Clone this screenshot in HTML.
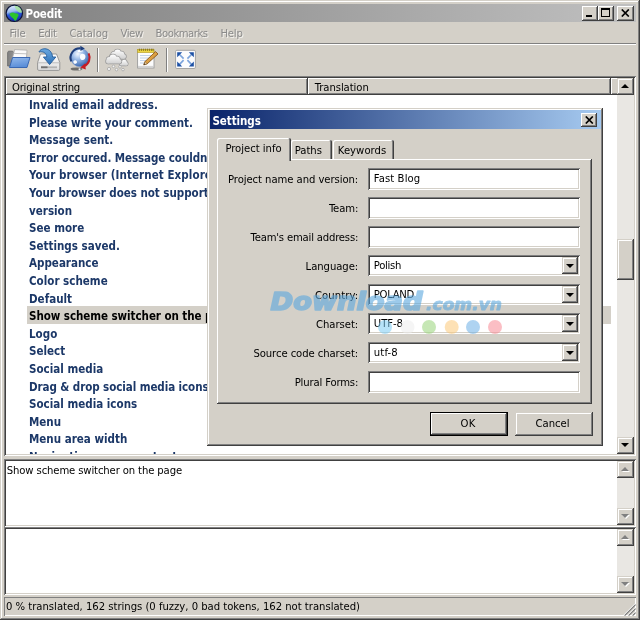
<!DOCTYPE html>
<html><head><meta charset="utf-8"><title>Poedit</title>
<style>
*{box-sizing:border-box;margin:0;padding:0}
html,body{width:640px;height:620px;overflow:hidden;background:#d4d0c8}
body{font-family:"DejaVu Sans Condensed","Liberation Sans",sans-serif;font-size:11.2px;color:#000;position:relative}
.abs{position:absolute}
.tx{position:absolute;white-space:nowrap;line-height:14px}
.b{font-weight:bold;font-size:11.5px}
#win{position:absolute;left:0;top:0;width:640px;height:620px;background:#d4d0c8;filter:blur(0.4px);
 box-shadow:inset -1px -1px #404040, inset 1px 1px #d4d0c8, inset -2px -2px #808080, inset 2px 2px #fff}
#title{position:absolute;left:4px;top:4px;width:632px;height:18px;background:linear-gradient(to right,#808080,#c0c0c0)}
.cbtn{position:absolute;width:16px;height:15px;background:#d4d0c8;box-shadow:inset -1px -1px #404040, inset 1px 1px #fff, inset -2px -2px #808080}
.mi{color:#8a8a8a;text-shadow:1px 1px 0 #f4f2ee}
.hsep{position:absolute;left:4px;width:632px;height:2px;border-top:1px solid #808080;border-bottom:1px solid #fff}
.vsep{position:absolute;width:2px;border-left:1px solid #808080;border-right:1px solid #fff}
.sunken{box-shadow:inset 1px 1px #808080, inset -1px -1px #fff, inset 2px 2px #404040, inset -2px -2px #d4d0c8}
.raised2{background:#d4d0c8;box-shadow:inset -1px -1px #404040, inset 1px 1px #d4d0c8, inset -2px -2px #808080, inset 2px 2px #fff}
.raised{background:#d4d0c8;box-shadow:inset -1px -1px #404040, inset 1px 1px #fff, inset -2px -2px #808080}
#list{position:absolute;left:4px;top:76px;width:632px;height:380px;background:#fff}
#listc{position:absolute;left:6px;top:77px;width:628px;height:377px;overflow:hidden}
.hdr{position:absolute;top:78px;height:17px}
.row{position:absolute;left:27px;width:584px;height:18px;font-weight:bold;font-size:11.5px;line-height:17px;color:#1c3868;white-space:nowrap;overflow:hidden;padding-left:2px;letter-spacing:0.01px}
.row.sel{color:#000}
.track{background-color:#e9e7e3}
.sbtn{position:absolute;left:0;width:17px;height:17px}
.arr{position:absolute;width:0;height:0;border-left:4px solid transparent;border-right:4px solid transparent}
.arr.up{border-bottom:4px solid #000}
.arr.dn{border-top:4px solid #000}
.arr.up.dis{border-bottom-color:#808080;filter:drop-shadow(1px 1px 0 #fff)}
.arr.dn.dis{border-top-color:#808080;filter:drop-shadow(1px 1px 0 #fff)}
.tbox{position:absolute;left:4px;width:632px;height:68px;background:#fff}
#status{position:absolute;left:4px;top:597px;width:632px;height:19px;box-shadow:inset 1px 1px #808080, inset -1px -1px #fff}
#dlg{position:absolute;left:207px;top:108px;width:396px;height:338px;background:#d4d0c8;
 box-shadow:inset -1px -1px #404040, inset 1px 1px #d4d0c8, inset -2px -2px #808080, inset 2px 2px #fff}
#dtitle{position:absolute;left:210px;top:110px;width:391px;height:19px;background:linear-gradient(to right,#0a246a,#a6caf0)}
.tab{position:absolute;background:#d4d0c8;border-radius:2px 2px 0 0;box-shadow:inset -1px 0 #404040, inset 1px 1px #fff, inset -2px 0 #808080}
#panel{position:absolute;left:217px;top:159px;width:375px;height:245px;background:#d4d0c8;box-shadow:inset -1px -1px #404040, inset 1px 1px #fff, inset -2px -2px #808080}
.inp{position:absolute;left:368px;width:212px;height:21px;background:#fff}
.dd{position:absolute;width:16px;height:17px}
.btn{position:absolute;width:78px;height:24px}
</style></head><body>
<div id="win">
 <div id="title"></div>
 <svg class="abs" style="left:5px;top:4px" width="19" height="19" viewBox="0 0 19 19">
   <defs><linearGradient id="gl" x1="0.3" y1="0" x2="0.5" y2="1"><stop offset="0" stop-color="#e4eefc"/><stop offset="0.38" stop-color="#9cbcf0"/><stop offset="0.55" stop-color="#2c58dc"/><stop offset="1" stop-color="#1428a8"/></linearGradient></defs>
   <circle cx="9.3" cy="9.3" r="8.2" fill="url(#gl)" stroke="#0c1438" stroke-width="1.2"/>
   <path d="M9.5 1.8 C13.5 1.6 16.8 4.5 17 8.6 C14.5 9.6 11 7.5 9.5 1.8Z" fill="#a4e49c" opacity="0.85"/>
   <path d="M4.6 9.8 C6.2 8.3 8.8 8.2 10.3 9.4 C11.8 8.9 13.4 9.8 13.7 11.2 C12.9 12.6 12.1 14 11.4 16 C10.7 17.2 9.5 17 9 15.6 C8.5 14.2 7 13.6 5.7 12.2 C4.9 11.2 4.4 10.4 4.6 9.8Z" fill="#2cc42c"/>
 </svg>
 <span id="f13" class="tx fit b" style="left:25.5px;top:7px;letter-spacing:-0.185px;color:#fff">Poedit</span>
 <div class="cbtn" style="left:582px;top:6px"><div class="abs" style="left:4px;top:9px;width:6px;height:2px;background:#000"></div></div>
 <div class="cbtn" style="left:598px;top:6px"><div class="abs" style="left:3px;top:2px;width:9px;height:9px;border:1px solid #000;border-top-width:2px"></div></div>
 <div class="cbtn" style="left:617px;top:6px;width:17px"><svg class="abs" style="left:4px;top:3px" width="9" height="8" viewBox="0 0 9 8"><path d="M0.8 0.5L7.8 7.5M7.8 0.5L0.8 7.5" stroke="#000" stroke-width="1.7"/></svg></div>
 <span id="f14" class="tx fit mi" style="left:9.5px;top:27px;letter-spacing:-0.216px;">File</span><span id="f15" class="tx fit mi" style="left:38.3px;top:27px;letter-spacing:-0.250px;">Edit</span><span id="f16" class="tx fit mi" style="left:69.6px;top:27px;letter-spacing:-0.008px;">Catalog</span><span id="f17" class="tx fit mi" style="left:120.4px;top:27px;letter-spacing:-0.369px;">View</span><span id="f18" class="tx fit mi" style="left:155.6px;top:27px;letter-spacing:-0.470px;">Bookmarks</span><span id="f19" class="tx fit mi" style="left:220.4px;top:27px;letter-spacing:-0.142px;">Help</span>
 <div class="hsep" style="top:43px"></div>
 <div id="toolbar">
<svg class="abs" style="left:0;top:44px" width="210" height="32" viewBox="0 44 210 32">
 <defs>
  <linearGradient id="fb" x1="0" y1="0" x2="0.3" y2="1"><stop offset="0" stop-color="#94baec"/><stop offset="1" stop-color="#5a8ed8"/></linearGradient>
  <linearGradient id="fg" x1="0" y1="0" x2="1" y2="0"><stop offset="0" stop-color="#808080"/><stop offset="1" stop-color="#b4b4b4"/></linearGradient>
  <linearGradient id="dv" x1="0" y1="0" x2="0" y2="1"><stop offset="0" stop-color="#ffffff"/><stop offset="1" stop-color="#dcdcdc"/></linearGradient>
  <linearGradient id="ar" x1="0" y1="0" x2="0" y2="1"><stop offset="0" stop-color="#6aa8e0"/><stop offset="1" stop-color="#2c70b8"/></linearGradient>
  <radialGradient id="gb" cx="0.38" cy="0.3" r="0.75"><stop offset="0" stop-color="#f4f8ff"/><stop offset="0.4" stop-color="#9cbce8"/><stop offset="1" stop-color="#2c5ca8"/></radialGradient>
  <linearGradient id="cl" x1="0" y1="0" x2="0" y2="1"><stop offset="0" stop-color="#fafafa"/><stop offset="1" stop-color="#d0d0d0"/></linearGradient>
  <linearGradient id="pc" x1="0" y1="0" x2="1" y2="1"><stop offset="0" stop-color="#f0b860"/><stop offset="1" stop-color="#c88828"/></linearGradient>
 </defs>
 <!-- open folder -->
 <path d="M7.6 52.6 L8.4 51.2 L12.6 51.2 L13.4 52.4 L26 52.4 L26 66 L7.6 66Z" fill="url(#fg)" stroke="#686868" stroke-width="0.8"/>
 <path d="M14.6 49.6 L27 50.2 L26.4 60 L12 60Z" fill="#fafafa" stroke="#a4a4a4" stroke-width="0.7"/>
 <path d="M13.6 53.4 L26.6 53.8" stroke="#b4b4b4" stroke-width="0.8"/>
 <path d="M12.6 57.5 L30 57.5 L27 67.5 L9.5 67.5Z" fill="url(#fb)" stroke="#2f5fae" stroke-width="0.9" stroke-linejoin="round"/>
 <!-- drive with arrow -->
 <path d="M40.5 54 L56.5 54 L59.8 62.5 L59.8 69 Q59.8 70.4 58.6 70.4 L38.8 70.4 Q37.6 70.4 37.6 69 L37.6 62.5Z" fill="url(#dv)" stroke="#909090" stroke-width="0.9" stroke-linejoin="round"/>
 <path d="M38 62.8 H59.4" stroke="#b0b0b0" stroke-width="0.8"/>
 <rect x="41" y="66.4" width="16" height="1.8" fill="#b4b4b4"/>
 <rect x="41" y="66.4" width="6.5" height="1.8" fill="#707070"/>
 <path d="M39 52 C40.5 47.5 51.5 46.5 52.6 57 L55.8 57 L49.6 64.6 L43.4 57 L46.8 57 C46.6 53 43 51 39 52Z" fill="url(#ar)" stroke="#245c9c" stroke-width="0.9" stroke-linejoin="round"/>
 <!-- globe with arrows -->
 <ellipse cx="76.5" cy="69" rx="6" ry="1.6" fill="#4c4c4c" opacity="0.75"/>
 <circle cx="79.5" cy="69.3" r="1" fill="#f0f0f0"/>
 <circle cx="80" cy="57.6" r="9.2" fill="url(#gb)" stroke="#7c98c8" stroke-width="0.7"/>
 <path d="M80.4 54.5 C81.9 53 84.9 53.6 85.4 56 C85.8 58.5 83.9 60.5 81.9 60 C79.9 59.4 79.4 56 80.4 54.5Z M73.6 61 C74.6 59.8 76.8 60.4 77 62 C77.1 63.6 75.1 64.4 74 63.4 C73.2 62.6 73.1 61.6 73.6 61Z M77.4 50.5 C79.4 49.6 82.4 50 83.4 51.2 C81.4 51.6 79.4 52.4 78 52 Z" fill="#fbfdff"/>
 <path d="M71.3 61.4 A9.4 9.4 0 0 1 80.6 48.3" fill="none" stroke="#1f3f7c" stroke-width="2.1"/>
 <path d="M80.3 45.8 L84.8 48.5 L80.5 51Z" fill="#1f3f7c"/>
 <path d="M88.6 53.4 A9.4 9.4 0 0 1 84 66.2" fill="none" stroke="#c41c24" stroke-width="2.1"/>
 <path d="M85 63.6 L80.2 67.4 L85.8 69.4Z" fill="#c41c24"/>
 <!-- cloud (disabled) -->
 <linearGradient id="cA" gradientUnits="userSpaceOnUse" x1="0" y1="49.5" x2="0" y2="59"><stop offset="0" stop-color="#ffffff"/><stop offset="1" stop-color="#cfcfcf"/></linearGradient><g fill="#9c9c9c" stroke="#9c9c9c" stroke-width="1.5"><circle cx="114" cy="54.6" r="2.8"/><circle cx="117.6" cy="52.8" r="3.2"/><circle cx="121.4" cy="54.2" r="2.8"/><circle cx="123.8" cy="56.4" r="2.2"/><circle cx="111.8" cy="56.6" r="2.0"/><rect x="111.5" y="55" width="13.5" height="3.8" rx="1.5"/></g><g fill="url(#cA)"><circle cx="114" cy="54.6" r="2.8"/><circle cx="117.6" cy="52.8" r="3.2"/><circle cx="121.4" cy="54.2" r="2.8"/><circle cx="123.8" cy="56.4" r="2.2"/><circle cx="111.8" cy="56.6" r="2.0"/><rect x="111.5" y="55" width="13.5" height="3.8" rx="1.5"/></g>
 <linearGradient id="cC" gradientUnits="userSpaceOnUse" x1="0" y1="59.5" x2="0" y2="66"><stop offset="0" stop-color="#ffffff"/><stop offset="1" stop-color="#cfcfcf"/></linearGradient><g fill="#9c9c9c" stroke="#9c9c9c" stroke-width="1.5"><circle cx="121.6" cy="63.2" r="2.1"/><circle cx="124.2" cy="62.2" r="2.5"/><circle cx="126.2" cy="63.8" r="1.7"/><rect x="120.5" y="62.8" width="6.8" height="2.7" rx="1.5"/></g><g fill="url(#cC)"><circle cx="121.6" cy="63.2" r="2.1"/><circle cx="124.2" cy="62.2" r="2.5"/><circle cx="126.2" cy="63.8" r="1.7"/><rect x="120.5" y="62.8" width="6.8" height="2.7" rx="1.5"/></g>
 <linearGradient id="cB" gradientUnits="userSpaceOnUse" x1="0" y1="54.5" x2="0" y2="64"><stop offset="0" stop-color="#ffffff"/><stop offset="1" stop-color="#cfcfcf"/></linearGradient><g fill="#9c9c9c" stroke="#9c9c9c" stroke-width="1.5"><circle cx="109.2" cy="59.8" r="2.7"/><circle cx="113" cy="57.8" r="3.3"/><circle cx="117" cy="59.5" r="2.9"/><circle cx="119.4" cy="61.2" r="2.0"/><circle cx="108" cy="61.4" r="2.0"/><rect x="107" y="60" width="14" height="3.4" rx="1.5"/></g><g fill="url(#cB)"><circle cx="109.2" cy="59.8" r="2.7"/><circle cx="113" cy="57.8" r="3.3"/><circle cx="117" cy="59.5" r="2.9"/><circle cx="119.4" cy="61.2" r="2.0"/><circle cx="108" cy="61.4" r="2.0"/><rect x="107" y="60" width="14" height="3.4" rx="1.5"/></g>
 <g fill="#f4f4f4" stroke="#a4a4a4" stroke-width="0.8"><circle cx="109" cy="69" r="1.6"/><circle cx="113.5" cy="66.4" r="1.3"/><circle cx="116.5" cy="69.6" r="1.3"/><circle cx="120" cy="66.8" r="1.3"/><circle cx="123" cy="69.6" r="1.3"/></g>
 <!-- notepad -->
 <rect x="137.6" y="51" width="16.4" height="17" fill="#fcfcfc" stroke="#9c9c9c" stroke-width="0.9"/>
 <path d="M138 66.4 H153.6" stroke="#c4c4c4" stroke-width="0.8"/>
 <rect x="137.6" y="49.4" width="16.4" height="3.2" fill="#ecd444" stroke="#b49c24" stroke-width="0.6"/>
 <path d="M139.4 48.6 V51 M141.4 48.6 V51 M143.4 48.6 V51 M145.4 48.6 V51 M147.4 48.6 V51 M149.4 48.6 V51 M151.4 48.6 V51 M153 48.6 V51" stroke="#6c5c10" stroke-width="0.7"/>
 <path d="M140 55.5 H151 M140 58 H151 M140 60.5 H151 M140 63 H148" stroke="#b4c8e4" stroke-width="0.8"/>
 <path d="M155.6 51.6 L158 54 L147.2 63.8 L143.8 64.8 L145 61.6Z" fill="url(#pc)" stroke="#7c4c14" stroke-width="0.8" stroke-linejoin="round"/>
 <path d="M143.8 64.8 L145 61.6 L147.2 63.8Z" fill="#f0dcb4" stroke="#7c4c14" stroke-width="0.5"/>
 <path d="M143.8 64.8 L144.4 63.3 L145.4 64.3Z" fill="#202020"/>
 <!-- fullscreen -->
 <rect x="175.6" y="50.3" width="19.8" height="18.2" rx="1.2" fill="#fcfcfd" stroke="#9c9c9c" stroke-width="0.9"/>
 <g stroke="#7ca4dc" stroke-width="1.7">
  <path d="M179.5 54.5 L183.6 58.6 M191.5 54.5 L187.4 58.6 M179.5 64.3 L183.6 60.2 M191.5 64.3 L187.4 60.2"/>
 </g>
 <g fill="#1d50a4">
  <path d="M177.2 52.2 L182.2 52.2 L177.2 57.2Z"/>
  <path d="M193.8 52.2 L188.8 52.2 L193.8 57.2Z"/>
  <path d="M177.2 66.6 L182.2 66.6 L177.2 61.6Z"/>
  <path d="M193.8 66.6 L188.8 66.6 L193.8 61.6Z"/>
 </g>
</svg>
<div class="vsep" style="left:97px;top:48px;height:24px"></div>
<div class="vsep" style="left:166px;top:48px;height:24px"></div>
</div>
 <div id="list" class="sunken"></div>
 <div id="listc" style="position:absolute;left:0;top:0;width:634px;height:454px;clip-path:inset(78px 0 0 6px)">
   <div class="row" style="top:97.0px"><span>Invalid email address.</span></div>
<div class="row" style="top:114.6px"><span>Please write your comment.</span></div>
<div class="row" style="top:132.2px"><span>Message sent.</span></div>
<div class="row" style="top:149.8px;letter-spacing:-0.075px"><span>Error occured. Message couldn't</span></div>
<div class="row" style="top:167.4px;letter-spacing:0.08px"><span>Your browser (Internet Explorer</span></div>
<div class="row" style="top:185.0px;letter-spacing:-0.03px"><span>Your browser does not support</span></div>
<div class="row" style="top:202.6px"><span>version</span></div>
<div class="row" style="top:220.2px"><span>See more</span></div>
<div class="row" style="top:237.8px"><span>Settings saved.</span></div>
<div class="row" style="top:255.4px"><span>Appearance</span></div>
<div class="row" style="top:273.0px"><span>Color scheme</span></div>
<div class="row" style="top:290.6px"><span>Default</span></div>
<div class="abs" style="left:27px;top:306px;width:584px;height:18px;background:#d4d0c8"></div>
<div class="row sel" style="top:308.2px;letter-spacing:-0.055px"><span>Show scheme switcher on the page</span></div>
<div class="row" style="top:325.8px"><span>Logo</span></div>
<div class="row" style="top:343.4px"><span>Select</span></div>
<div class="row" style="top:361.0px"><span>Social media</span></div>
<div class="row" style="top:378.6px;letter-spacing:-0.07px"><span>Drag &amp; drop social media icons</span></div>
<div class="row" style="top:396.2px"><span>Social media icons</span></div>
<div class="row" style="top:413.8px"><span>Menu</span></div>
<div class="row" style="top:431.4px"><span>Menu area width</span></div>
<div class="row" style="top:449.0px"><span>Navigation menu content</span></div>
 </div>
 <div class="hdr raised" style="left:6px;width:302px"></div>
 <div class="hdr raised" style="left:308px;width:303px"></div>
 <div class="hdr" style="left:611px;width:6px;background:#d4d0c8;box-shadow:inset 0 -1px #404040, inset 1px 1px #fff, inset 0 -2px #808080"></div>
 <span id="f20" class="tx fit " style="left:12px;top:81px;letter-spacing:-0.232px;">Original string</span><span id="f21" class="tx fit " style="left:314.8px;top:81px;letter-spacing:-0.066px;">Translation</span>
 <div class="abs track" style="left:617px;top:78px;width:17px;height:376px"><div class="sbtn raised2" style="top:0"><div class="arr up" style="left:4px;top:6px"></div></div><div class="sbtn raised2" style="top:161px;height:41px"></div><div class="sbtn raised2" style="top:359px"><div class="arr dn" style="left:4px;top:6px"></div></div></div>
 <div class="tbox sunken" style="top:459px"></div>
 <span id="f22" class="tx fit " style="left:6.8px;top:464px;letter-spacing:-0.124px;">Show scheme switcher on the page</span>
 <div class="abs track" style="left:617px;top:461px;width:17px;height:64px"><div class="sbtn raised2" style="top:0"><div class="arr up dis" style="left:4px;top:6px"></div></div><div class="sbtn raised2" style="top:47px"><div class="arr dn dis" style="left:4px;top:6px"></div></div></div>
 <div class="tbox sunken" style="top:527px"></div>
 <div class="abs track" style="left:617px;top:529px;width:17px;height:64px"><div class="sbtn raised2" style="top:0"><div class="arr up dis" style="left:4px;top:6px"></div></div><div class="sbtn raised2" style="top:47px"><div class="arr dn dis" style="left:4px;top:6px"></div></div></div>
 <div id="status"></div>
 <svg class="abs" style="left:622px;top:602px" width="14" height="14" viewBox="0 0 14 14"><path d="M2.5 13.5L13.5 2.5M6.5 13.5L13.5 6.5M10.5 13.5L13.5 10.5" stroke="#808080" stroke-width="1.5"/><path d="M1.3 13.5L13.5 1.3M5.3 13.5L13.5 5.3M9.3 13.5L13.5 9.3" stroke="#fff" stroke-width="0.9"/></svg>
 <span id="f23" class="tx fit " style="left:6px;top:600px;letter-spacing:-0.015px;">0 % translated, 162 strings (0 fuzzy, 0 bad tokens, 162 not translated)</span>

 <div id="dlg"></div>
 <div id="dtitle"></div>
 <span id="f24" class="tx fit b" style="left:212.4px;top:114px;letter-spacing:-0.055px;color:#fff">Settings</span>
 <div class="cbtn" style="left:581px;top:113px;height:14px"><svg class="abs" style="left:4px;top:3px" width="9" height="8" viewBox="0 0 9 8"><path d="M0.8 0.5L7.8 7.5M7.8 0.5L0.8 7.5" stroke="#000" stroke-width="1.7"/></svg></div>
 <div id="panel"></div>
 <div class="tab" style="left:217px;top:138px;width:74px;height:23px"></div>
 <div class="tab" style="left:291px;top:140px;width:41px;height:19px"></div>
 <div class="tab" style="left:333px;top:140px;width:61px;height:19px"></div>
 <span id="f25" class="tx fit " style="left:225.4px;top:142px;letter-spacing:-0.022px;">Project info</span><span id="f26" class="tx fit " style="left:294.7px;top:144px;letter-spacing:-0.002px;">Paths</span><span id="f27" class="tx fit " style="left:337.8px;top:144px;letter-spacing:0.043px;">Keywords</span>
  <div class="inp sunken" style="top:168px;height:22px"></div><span id="f0" class="tx fit " style="left:228px;top:173px;letter-spacing:-0.061px;">Project name and version:</span><span id="f1" class="tx fit " style="left:373.8px;top:172px;letter-spacing:0.102px;">Fast Blog</span>
  <div class="inp sunken" style="top:197px;height:22px"></div><span id="f2" class="tx fit " style="left:329px;top:202px;letter-spacing:-0.123px;">Team:</span>
  <div class="inp sunken" style="top:226px;height:22px"></div><span id="f3" class="tx fit " style="left:250.6px;top:231px;letter-spacing:-0.186px;">Team's email address:</span>
  <div class="inp sunken" style="top:255px;height:21px"></div><div class="dd raised2" style="left:562px;top:257px"><div class="arr dn" style="left:4px;top:7px"></div></div><span id="f4" class="tx fit " style="left:305.6px;top:260px;letter-spacing:-0.053px;">Language:</span><span id="f5" class="tx fit " style="left:373.8px;top:259px;letter-spacing:-0.308px;">Polish</span>
  <div class="inp sunken" style="top:284px;height:21px"></div><div class="dd raised2" style="left:562px;top:286px"><div class="arr dn" style="left:4px;top:7px"></div></div><span id="f6" class="tx fit " style="left:315px;top:289px;letter-spacing:0.080px;">Country:</span><span id="f7" class="tx fit " style="left:373.8px;top:288px;letter-spacing:-0.303px;">POLAND</span>
  <div class="inp sunken" style="top:313px;height:21px"></div><div class="dd raised2" style="left:562px;top:315px"><div class="arr dn" style="left:4px;top:7px"></div></div><span id="f8" class="tx fit " style="left:316px;top:318px;letter-spacing:-0.038px;">Charset:</span><span id="f9" class="tx fit " style="left:373.8px;top:317px;letter-spacing:-0.029px;">UTF-8</span>
  <div class="inp sunken" style="top:342px;height:21px"></div><div class="dd raised2" style="left:562px;top:344px"><div class="arr dn" style="left:4px;top:7px"></div></div><span id="f10" class="tx fit " style="left:253.4px;top:347px;letter-spacing:-0.071px;">Source code charset:</span><span id="f11" class="tx fit " style="left:373.8px;top:346px;letter-spacing:0.141px;">utf-8</span>
  <div class="inp sunken" style="top:371px;height:22px"></div><span id="f12" class="tx fit " style="left:294.7px;top:376px;letter-spacing:-0.153px;">Plural Forms:</span>
 <div class="btn raised2" style="left:430px;top:412px;box-shadow:inset 0 0 0 1px #000, inset -2px -2px #404040, inset 2px 2px #fff, inset -3px -3px #808080"></div>
 <div class="btn raised2" style="left:515px;top:412px"></div>
 <span id="f28" class="tx fit " style="left:460.6px;top:417px;letter-spacing:0.234px;">OK</span><span id="f29" class="tx fit " style="left:535.6px;top:417px;letter-spacing:-0.052px;">Cancel</span>
 <svg class="abs" style="left:260px;top:280px;pointer-events:none" width="260" height="62" viewBox="260 280 260 62">
  <g font-family="'DejaVu Sans','Liberation Sans',sans-serif" font-weight="bold" font-style="oblique" fill="#5ca8de" stroke="#5ca8de" stroke-linejoin="round" opacity="0.6">
   <text x="270.5" y="309.6" font-size="24.5" textLength="152" lengthAdjust="spacingAndGlyphs" stroke-width="1.7">Download</text>
   <text x="426" y="309.8" font-size="16.5" textLength="76" lengthAdjust="spacingAndGlyphs" stroke-width="0.9">.com.vn</text>
  </g>
  <g fill-opacity="0.55">
   <circle cx="385" cy="327" r="7" fill="#7cccf4"/><circle cx="407.5" cy="327" r="7" fill="#ececec"/><circle cx="429" cy="327" r="7" fill="#98d478"/>
   <circle cx="451.7" cy="327" r="7" fill="#fcc878"/><circle cx="473" cy="327" r="7" fill="#6caee6"/><circle cx="495" cy="327" r="7" fill="#f88894"/>
  </g>
 </svg>
</div>
</body></html>
